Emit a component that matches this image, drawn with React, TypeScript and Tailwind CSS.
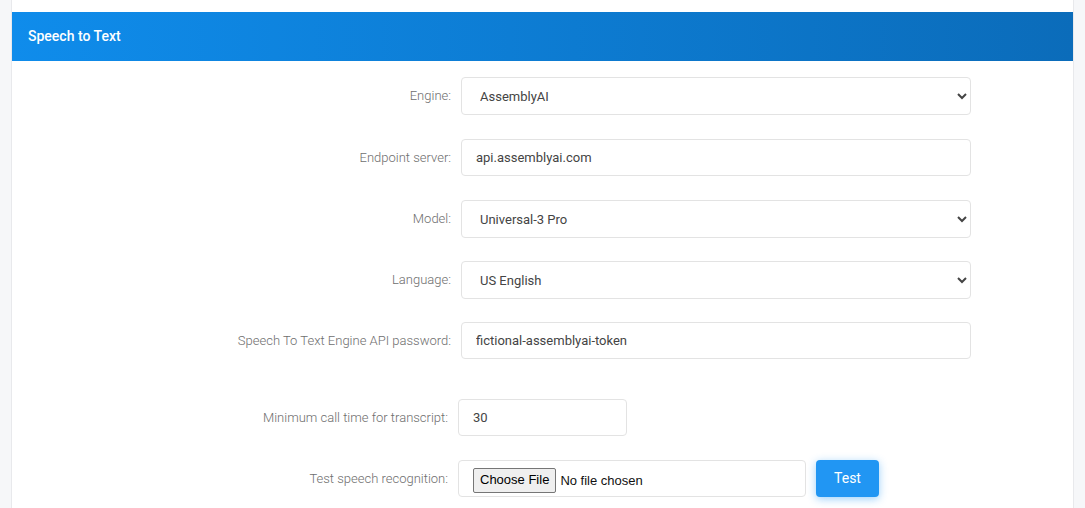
import React from "react";

const labelCls =
  "text-[13px] font-light text-[#6e6e6e] text-right whitespace-nowrap";
const inputCls =
  "h-[37px] w-[510px] rounded-[4px] border border-[#e3e3e3] bg-white px-[14px] text-[13px] text-[#444] outline-none";
const selectCls =
  "h-[38px] w-[510px] rounded-[4px] border border-[#e3e3e3] bg-white pl-[14px] pr-[6px] text-[13px] text-[#444] outline-none";

function Row({
  label,
  children,
  narrow = false,
  className = "",
}: {
  label: string;
  children: React.ReactNode;
  narrow?: boolean;
  className?: string;
}) {
  return (
    <div className={`flex items-center ${className}`}>
      <div className={`${labelCls} ${narrow ? "w-[436px]" : "w-[439px]"}`}>
        {label}
      </div>
      <div className="ml-[10px]">{children}</div>
    </div>
  );
}

export default function App() {
  return (
    <div
      className="min-h-[508px] bg-[#f6f7f9] px-[11px]"
      style={{ fontFamily: "Roboto, 'Noto Sans', sans-serif" }}
    >
      <div className="min-h-[508px] border-x border-[#e8e9ec] bg-white pt-[12px]">
        <div className="flex h-[49px] items-center bg-[linear-gradient(to_right,#0f8ceb,#0b6cba)] px-[16px]">
          <span className="text-[14px] font-medium text-white">
            Speech to Text
          </span>
        </div>
        <div className="pt-[16px]">
          <Row label="Engine:">
            <select className={selectCls} defaultValue="AssemblyAI">
              <option>AssemblyAI</option>
            </select>
          </Row>
          <Row label="Endpoint server:" className="mt-[24px]">
            <input className={inputCls} defaultValue="api.assemblyai.com" />
          </Row>
          <Row label="Model:" className="mt-[24px]">
            <select className={selectCls} defaultValue="Universal-3 Pro">
              <option>Universal-3 Pro</option>
            </select>
          </Row>
          <Row label="Language:" className="mt-[23px]">
            <select className={selectCls} defaultValue="US English">
              <option>US English</option>
            </select>
          </Row>
          <Row label="Speech To Text Engine API password:" className="mt-[23px]">
            <input
              className={inputCls}
              defaultValue="fictional-assemblyai-token"
            />
          </Row>
          <Row
            label="Minimum call time for transcript:"
            narrow
            className="mt-[40px]"
          >
            <input
              className="h-[37px] w-[169px] rounded-[4px] border border-[#e3e3e3] bg-white px-[14px] text-[13px] text-[#444] outline-none"
              defaultValue="30"
            />
          </Row>
          <Row label="Test speech recognition:" narrow className="mt-[24px]">
            <div className="flex items-center">
              <div className="flex h-[37px] w-[348px] items-center rounded-[4px] border border-[#e3e3e3] bg-white px-[14px] pt-[3px]">
                <input
                  type="file"
                  className="text-[13px] text-[#111] file:mr-[4px] file:h-[25px] file:rounded-[2px] file:border file:border-solid file:border-[#767676] file:bg-[#efefef] file:px-[6px] file:text-[13px] file:text-black"
                  style={{ fontFamily: "'Liberation Sans', Arial, sans-serif" }}
                />
              </div>
              <button className="ml-[10px] h-[37px] w-[63px] rounded-[4px] bg-[#2196f3] text-[14px] text-white shadow-[0_2px_8px_rgba(33,150,243,0.45)]">
                Test
              </button>
            </div>
          </Row>
        </div>
      </div>
    </div>
  );
}
